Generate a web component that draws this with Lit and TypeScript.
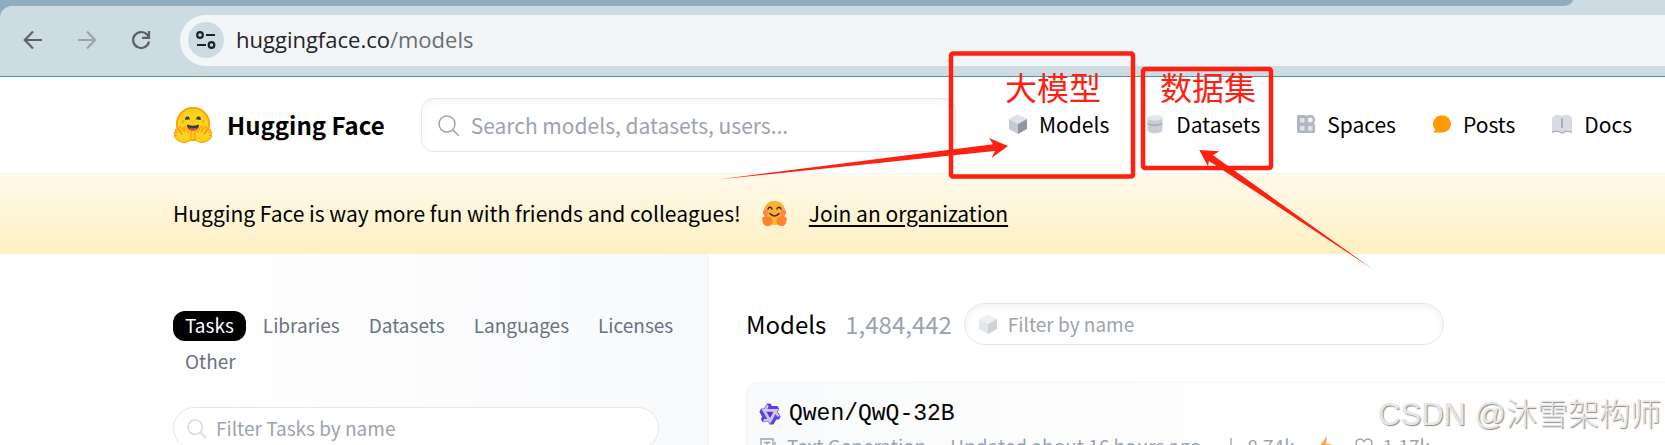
import { LitElement, html, css } from "lit";
import { customElement } from "lit/decorators.js";

const cube = (top: string, left: string, right: string) => html`
  <svg width="20" height="20" viewBox="0 0 20 20" aria-hidden="true">
    <path fill=${top} d="M10 .3 19 5 10 9.9 1 5z"/>
    <path fill=${left} d="M1 5 10 9.9V20L1 15z"/>
    <path fill=${right} d="M19 5 10 9.9V20l9-5z"/>
  </svg>`;

const lens = (size: number) => html`
  <svg width=${size} height=${size} viewBox="0 0 21 21" fill="none" stroke="currentColor" stroke-width="1.5" stroke-linecap="round" aria-hidden="true">
    <circle cx="9" cy="9" r="8"/><path d="M14.8 14.8 20.2 20.2"/>
  </svg>`;

const logo = html`
  <svg width="40" height="36" viewBox="0 0 40 36" aria-hidden="true">
    <circle cx="20" cy="17" r="16.2" fill="#ffd21e" stroke="#ff9d0b" stroke-width="1.800"/>
    <circle cx="10" cy="14.500" r="1.600" fill="#ffac03"/><circle cx="30" cy="14.500" r="1.600" fill="#ffac03"/>
    <path d="M12 13c0-2.600 1.200-3.700 2.700-3.500 1.500.2 2.300 1.500 2.100 3.300-1-.9-1.700-.6-2.400.2-.7-.4-1.500-.4-2.400 0z" fill="#3a3b45"/>
    <path d="M28 13c0-2.600-1.200-3.700-2.700-3.500-1.500.2-2.300 1.500-2.100 3.300 1-.9 1.700-.6 2.400.2.7-.4 1.500-.4 2.400 0z" fill="#3a3b45"/>
    <path d="M14 17.500c3.600 1.500 8.400 1.500 12 0 .3 3.200-2.200 6.100-6 6.100s-6.300-2.900-6-6.100z" fill="#3a3b45"/>
    <path d="M16 21.600c1.200-1 2.700-.9 4 0 1.300-.9 2.800-1 4 0-1 1.300-2.300 2-4 2s-3-.7-4-2z" fill="#ef4e4e"/>
    <g fill="#ffd21e" stroke="#ff9d0b" stroke-width="1.100" stroke-linejoin="round" stroke-linecap="round">
      <path d="M9.300 27.500 6 21.500c-.6-1.400.9-2.300 2-1l4 4.700c-.4-1.500-1-3.200-1.200-4.300-.2-1.500 1.600-1.900 2.300-.5l2.200 5.100c.7-1.500 1.400-2.300 2.500-1.700 1.200.8 0 2.800.4 5.200.3 3-1.600 5.500-5.200 6.200-3.400.6-6.200-.2-8.500-2.400-1.800-1.700-3.400-2.700-3.200-4 .3-1 1.300-.8 2.100-.3-1.500-1.300-2.500-2.300-2-3.200.6-1 1.800-.3 2.600.4L2.600 23.800c-.7-1.200.7-2.200 1.800-1.200z"/>
      <path d="M30.700 27.500 34 21.500c.6-1.400-.9-2.300-2-1l-4 4.700c.4-1.500 1-3.200 1.200-4.300.2-1.500-1.600-1.900-2.300-.5l-2.200 5.100c-.7-1.500-1.400-2.300-2.500-1.700-1.200.8 0 2.800-.4 5.200-.3 3 1.600 5.500 5.200 6.200 3.400.6 6.200-.2 8.500-2.400 1.800-1.700 3.400-2.700 3.200-4-.3-1-1.300-.8-2.100-.3 1.500-1.300 2.500-2.300 2-3.200-.6-1-1.800-.3-2.600.4l1.400-1.900c.7-1.200-.7-2.200-1.800-1.200z"/>
    </g>
  </svg>`;

const hug = html`
  <svg width="27" height="25" viewBox="0 0 27 25" aria-hidden="true">
    <path d="M13.500 0C20 0 24.200 4.500 24.200 11.500S20.500 24 13.500 24 2.800 18.500 2.800 11.500 7 0 13.500 0z" fill="#ffb02e"/>
    <circle cx="4.700" cy="11.500" r="2.800" fill="#ff8257"/><circle cx="22.300" cy="11.500" r="2.800" fill="#ff8257"/>
    <path d="M7 8c.8-2.300 3.200-2.300 4 0M16 8c.8-2.300 3.200-2.300 4 0M9 12.500c2.500 3.200 6.500 3.200 9 0" fill="none" stroke="#402a32" stroke-width="1.500" stroke-linecap="round"/>
    <path d="M1.300 18.500c-.4-2 .8-3 2-2.300l1.200-1.700c1-.9 2.200-.2 2 1l2 .2c1.700.5 3 2 3 4.300 0 3-2 5-5 5-3.500 0-4.800-2.500-5.200-6.500zM25.700 18.500c.4-2-.8-3-2-2.300l-1.200-1.700c-1-.9-2.200-.2-2 1l-2 .2c-1.700.5-3 2-3 4.300 0 3 2 5 5 5 3.500 0 4.800-2.500 5.200-6.500z" fill="#ff822d"/>
  </svg>`;

const icons = {
  datasets: html`<svg width="20" height="20" viewBox="0 0 20 20" aria-hidden="true">
    <path fill="#c9cdd5" d="M2.500 3.500h15V16c0 2-3.300 3.200-7.500 3.200S2.500 18 2.500 16z"/>
    <ellipse cx="10" cy="3.800" rx="7.500" ry="2.900" fill="#e2e5e9"/>
    <path d="M2.500 9.600c1.800 2 13.200 2 15 0" fill="none" stroke="#9299a6" stroke-width="1"/></svg>`,
  spaces: html`<svg width="20" height="20" viewBox="0 0 20 20" aria-hidden="true">
    <path fill="#b0b6c2" d="M1 2.500A1.500 1.500 0 0 1 2.500 1H9l1 1c3-2 9-1.500 9 3.500 0 2-.5 3-1.200 4l1.200 1.500v6.500a1.500 1.500 0 0 1-1.500 1.500h-15A1.500 1.500 0 0 1 1 17.500z"/>
    <path fill="#dfe2e7" d="M4 4h4.500v4.500H4zM4 12h4.500v4.500H4zM12 12h4.500v4.500H12z"/><circle cx="14.200" cy="6" r="2.500" fill="#f0f1f4"/></svg>`,
  posts: html`<svg width="20" height="20" viewBox="0 0 20 20" aria-hidden="true">
    <path fill="#ff9a00" d="M10.500 1.500a8.500 8.500 0 0 1 0 17H2.300c-1 0-1-.9-.4-1.200 1.200-.6 1.500-1.200 1-2.100A8.500 8.500 0 0 1 10.500 1.500z"/></svg>`,
  docs: html`<svg width="22" height="20" viewBox="0 0 22 20" aria-hidden="true">
    <path fill="#a9afbc" d="M1 5v14c3-1.300 7-1.300 8.500.4h3C14 17.700 18 17.700 21 19V5z"/>
    <path fill="#d9dbe2" d="M1 4c1-.6 1.500-2.500 3-2.800C7 .7 9.500 1 11 2.500 12.500 1 15 .7 18 1.200c1.500.3 2 2.200 3 2.800v13.600c-1.500-.3-6.500-1.800-9 .5h-2c-2.500-2.300-7.500-.8-9-.5z"/>
    <path d="M11 4.500V14" stroke="#848b9b" stroke-width="1.200"/></svg>`,
};

const nav = [
  ["Models", cube("#e0e2e7", "#c5c9d1", "#8f96a6")],
  ["Datasets", icons.datasets],
  ["Spaces", icons.spaces],
  ["Posts", icons.posts],
  ["Docs", icons.docs],
];

const qwen = html`<svg width="22" height="22" viewBox="0.500 0.500 23 23" aria-hidden="true">
  <path fill="#cfc6fb" d="M9 1.500h3.500l1.300 2.300h6L21.500 7l-1.300 2.600 2.700 4.900-1.800 3h-3l-3 5h-3.600l-1.300-2.400H4.500l-1.600-3L4.200 15 1.200 9.700l1.600-3h3.300z"/>
  <path fill="#5f3fe0" d="M12.604 1.340c.393.690.784 1.382 1.174 2.075a.18.18 0 00.157.091h5.552c.174 0 .322.110.446.327l1.454 2.570c.190.337.240.478.024.837-.260.430-.513.864-.760 1.300l-.367.658c-.106.196-.223.280-.040.512l2.652 4.637c.172.301.111.494-.043.770-.437.785-.882 1.564-1.335 2.340-.159.272-.352.375-.680.370-.777-.016-1.552-.010-2.327.016a.099.099 0 00-.081.050 575.097 575.097 0 01-2.705 4.740c-.169.293-.380.363-.725.364-.997.003-2.002.004-3.017.002a.537.537 0 01-.465-.271l-1.335-2.323a.09.09 0 00-.083-.049H4.982c-.285.030-.553-.001-.805-.092l-1.603-2.770a.543.543 0 01-.002-.540l1.207-2.120a.198.198 0 000-.197 550.951 550.951 0 01-1.875-3.272l-.790-1.395c-.160-.310-.173-.496.095-.965.465-.813.927-1.625 1.387-2.436.132-.234.304-.334.584-.335a338.300 338.300 0 012.589-.001.124.124 0 00.107-.063l2.806-4.895a.488.488 0 01.422-.246c.524-.001 1.053 0 1.583-.006L11.704 1c.341-.003.724.032.900.340zm-3.432.403a.06.06 0 00-.052.030L6.254 6.788a.157.157 0 01-.135.078H3.253c-.056 0-.070.025-.041.074l5.810 10.156c.025.042.013.062-.034.063l-2.795.015a.218.218 0 00-.200.116l-1.320 2.310c-.044.078-.021.118.068.118l5.716.008c.046 0 .080.020.104.061l1.403 2.454c.046.081.092.082.139 0l5.006-8.760.783-1.382a.055.055 0 01.096 0l1.424 2.530a.122.122 0 00.107.062l2.763-.020a.04.04 0 00.035-.020.041.041 0 000-.040l-2.900-5.086a.108.108 0 010-.113l.293-.507 1.120-1.977c.024-.041.012-.062-.035-.062H9.200c-.059 0-.073-.026-.043-.077l1.434-2.505a.107.107 0 000-.114L9.225 1.774a.06.06 0 00-.053-.031z"/>
  <path fill="#5a2fd6" d="M8.300 9.700h7.400L12 16.200z"/></svg>`;

@customElement("app-root")
export class AppRoot extends LitElement {
  static styles = css`
    :host {
      display: block; position: relative; height: 100vh; overflow: hidden;
      background: #fff; color: #000;
      font-family: "Noto Sans CJK SC", sans-serif; font-size: 21px; line-height: 30px;
    }
    * { box-sizing: border-box; }
    svg { display: block; flex: none; }
    button, input { font: inherit; color: inherit; border: 0; background: none; margin: 0; padding: 0; }
    input { flex: 1; min-width: 0; outline: 0; }
    input::placeholder { color: #9ca3af; opacity: 1; }
    a { color: inherit; text-decoration: none; }
    h1, h2 { margin: 0; font-weight: 400; }

    .chrome { background: #90adc0; }
    .tabs { height: 6px; background: linear-gradient(90deg, #90adc0 50%, #cddce3 50%); }
    .tab { height: 6px; margin-right: 92px; background: #90adc0; border-bottom-right-radius: 10px 6px; }
    .bar { display: flex; align-items: center; height: 71px; padding: 0 0 2px 21px; background: #cddce3; border-top-left-radius: 12px; border-bottom: 1px solid #4f92a6; }
    .tool { width: 24px; height: 24px; margin-right: 30px; color: #5c6166; }
    .dim { color: #9aa5ae; }
    .omni { display: flex; align-items: center; flex: 1; height: 51px; margin-left: -3px; padding-left: 8px; gap: 12px; background: #f2f6f8; border-radius: 26px 0 0 26px; font-family: "Open Sans", sans-serif; font-size: 22px; line-height: 28px; color: #1f2326; }
    .site { display: grid; place-items: center; width: 36px; height: 36px; border-radius: 50%; background: #cddce3; }
    .url { padding-bottom: 2px; }
    .path { color: #6a6e72; }

    header { display: flex; align-items: center; height: 96px; padding: 0 33px 0 173px; }
    .brand { display: flex; align-items: center; gap: 14px; font-weight: 700; font-size: 24px; }
    .search { display: flex; align-items: center; flex: 1; height: 54px; margin: 0 52px 0 36px; padding: 0 16px; gap: 12px; border: 1px solid #e5e7eb; border-radius: 12px; box-shadow: inset 0 3px 6px #0000000d; color: #9ca3af; }
    nav { display: flex; gap: 36px; padding-bottom: 2px; }
    nav a { display: flex; align-items: center; gap: 11px; }

    .banner { display: flex; align-items: center; height: 81px; padding: 0 173px 2px; gap: 21px; border-top: 1px solid #f3f4f6; background: linear-gradient(#fffaea, #fef0c3); }
    .say { display: flex; align-items: center; gap: 20px; }
    .banner a { text-decoration: underline; text-underline-offset: 3px; text-decoration-thickness: 2px; }

    main { display: flex; height: 400px; }
    aside { flex: none; width: 709px; padding: 57px 49px 0 173px; border-right: 1px solid #f3f4f6; background: linear-gradient(90deg, #fff 25%, #f8f9fb); font-size: 19px; }
    .cats { display: flex; flex-wrap: wrap; gap: 6px 5px; margin-right: -40px; color: #6b7280; }
    .cats button { height: 30px; padding: 0 12px 2px; border-radius: 12px; line-height: 28px; }
    .cats .on { background: #000; color: #fff; }
    .pill { display: flex; align-items: center; gap: 10px; height: 42px; padding: 0 13px; border: 1px solid #e5e7eb; border-radius: 21px; background: #fff; font-size: 19px; }
    aside .pill { margin-top: 30px; color: #d1d5db; }
    section { flex: 1; min-width: 0; padding: 49px 0 0 37px; }
    .head { display: flex; align-items: center; font-size: 24px; }
    .title { font-size: 24px; }
    .count { color: #9ca3af; margin: 0 12px 0 19px; }
    .head .pill { width: 480px; box-shadow: inset 0 3px 6px #0000000d; }
    article { height: 120px; margin-top: 37px; padding: 14px 12px; border: 1px solid #f3f4f6; border-right: 0; border-radius: 12px 0 0 0; background: linear-gradient(90deg, #f9fafb, #fff 60%); }
    article h2 { display: flex; align-items: center; gap: 8px; font: 23px/34px "Liberation Mono", monospace; }
    .meta { display: flex; align-items: center; gap: 24px; font-size: 19px; color: #9ca3af; }
    .meta span { display: flex; align-items: center; gap: 10px; }

    .marks { position: absolute; inset: 0; pointer-events: none; }
    .note { position: absolute; top: 68px; color: #ff2012; font-size: 32px; line-height: 36px; }
    .one { left: 1005px; }
    .two { left: 1160px; }
    .water { position: absolute; right: 4px; bottom: 8px; font: 300 31px/44px "Liberation Sans", "Noto Sans CJK SC", sans-serif; color: #e6e6e6; text-shadow: 1px 1px 1px #888; }
  `;

  render() {
    return html`
      <div class="chrome">
        <div class="tabs"><div class="tab"></div></div>
        <div class="bar">
          <button class="tool" aria-label="Back"><svg width="24" height="24" viewBox="0 0 24 24" fill="none" stroke="currentColor" stroke-width="2.200"><path d="M21 12H4M12 3.500 3.800 12l8.200 8.500"/></svg></button>
          <button class="tool dim" aria-label="Forward"><svg width="24" height="24" viewBox="0 0 24 24" fill="none" stroke="currentColor" stroke-width="2.200"><path d="M3 12h17M12 3.500 20.200 12 12 20.500"/></svg></button>
          <button class="tool" aria-label="Reload"><svg width="24" height="24" viewBox="0 0 24 24" fill="none" stroke="currentColor" stroke-width="2.200"><path d="M20 13.500A8 8 0 1 1 18.200 6.800L20 9M20 3v6.800h-7"/></svg></button>
          <div class="omni">
            <button class="site" aria-label="Site information"><svg width="22" height="22" viewBox="0 0 22 22" fill="none" stroke="currentColor" stroke-width="2.200"><circle cx="5" cy="6" r="2.800"/><path d="M11 6h9M2 16h9"/><circle cx="16.500" cy="16" r="2.800"/></svg></button>
            <div class="url">huggingface.co<span class="path">/models</span></div>
          </div>
        </div>
      </div>
      <header>
        <a class="brand" href="#">${logo}Hugging Face</a>
        <label class="search">${lens(21)}<input aria-label="Search" placeholder="Search models, datasets, users..."></label>
        <nav>${nav.map(([name, icon]) => html`<a href="#">${icon}${name}</a>`)}</nav>
      </header>
      <div class="banner">
        <span class="say">Hugging Face is way more fun with friends and colleagues! ${hug}</span>
        <a href="#">Join an organization</a>
      </div>
      <main>
        <aside>
          <div class="cats">
            ${["Tasks", "Libraries", "Datasets", "Languages", "Licenses", "Other"].map((name, i) => html`<button class=${i ? "" : "on"}>${name}</button>`)}
          </div>
          <label class="pill">${lens(19)}<input aria-label="Filter tasks" placeholder="Filter Tasks by name"></label>
        </aside>
        <section>
          <div class="head">
            <h1 class="title">Models</h1>
            <span class="count">1,484,442</span>
            <label class="pill">${cube("#eef0f2", "#e3e6ea", "#cfd3d9")}<input aria-label="Filter models" placeholder="Filter by name"></label>
          </div>
          <article>
            <h2>${qwen}Qwen/QwQ-32B</h2>
            <div class="meta">
              <span><svg width="18" height="18" viewBox="0 0 18 18" fill="none" stroke="currentColor" stroke-width="1.300"><path d="M14 9V2H2v14h6M5 5.500h6M8 5.500V12M16 5v3"/></svg>Text Generation</span>
              <span>Updated about 16 hours ago</span>
              <span><svg width="12" height="18" viewBox="0 0 12 18" fill="none" stroke="currentColor" stroke-width="1.300"><path d="M6 1v13M1.500 9.500 6 14l4.500-4.500"/></svg>8.74k</span>
              <svg width="12" height="20" viewBox="0 0 12 20"><path d="M8 0 0 11h5l-1 9 8-12H7z" fill="#ffa640"/></svg>
              <span><svg width="18" height="18" viewBox="0 0 18 18" fill="none" stroke="currentColor" stroke-width="1.400"><path d="M9 16 2.200 9C-.5 5.500 2 2 5 2c2 0 3.200 1 4 2.500C9.800 3 11 2 13 2c3 0 5.500 3.500 2.800 7z"/></svg>1.17k</span>
            </div>
          </article>
        </section>
      </main>
      <svg class="marks" width="1665" height="445" viewBox="0 0 1665 445" fill="#ff2012" aria-hidden="true">
        <g fill="none" stroke="#ff2012" stroke-width="4.500">
          <rect x="951" y="53.500" width="182" height="123" rx="2"/>
          <rect x="1143" y="69" width="128" height="99" rx="2"/>
        </g>
        <path d="M718 179.500 993 144.300 989 138l19 8-16.300 12 3.300-7z"/>
        <path d="M1372.500 269 1209 161l-1 5.300-8.700-16.300 20 1.300-6.300 4z"/>
      </svg>
      <div class="note one">大模型</div>
      <div class="note two">数据集</div>
      <div class="water">CSDN @沐雪架构师</div>
    `;
  }
}
